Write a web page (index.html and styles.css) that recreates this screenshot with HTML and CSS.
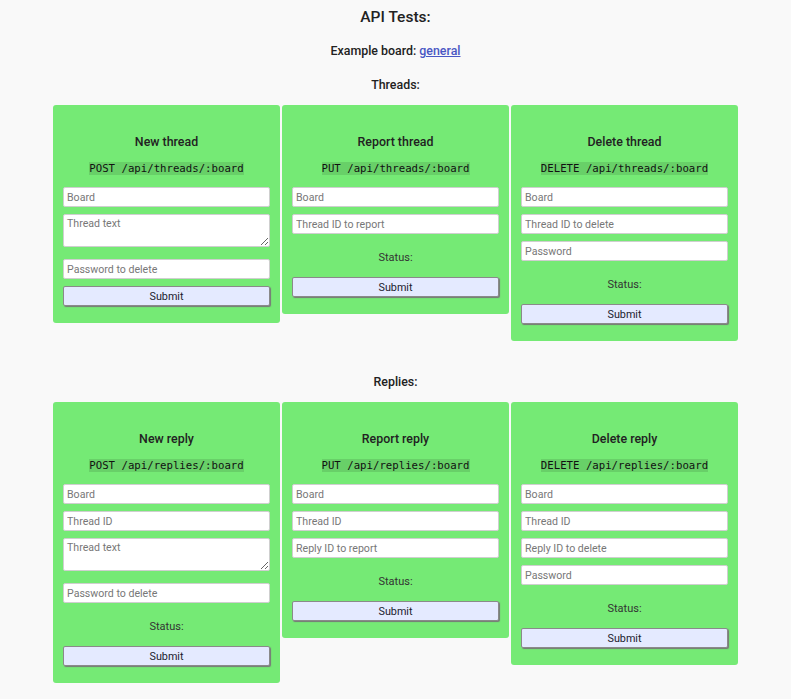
FILE: index.html
```html
<!DOCTYPE html>
<html>
<head>
<meta charset="utf-8">
<title>API Tests</title>
<link rel="stylesheet" href="styles.css">
</head>
<body>
<h1 class="title">API Tests:</h1>
<p class="example">Example board: <a href="#">general</a></p>

<h2 class="section section-threads">Threads:</h2>
<div class="cards">
  <form class="card">
    <h3 class="card-title">New thread</h3>
    <div class="endpoint"><code>POST /api/threads/:board</code></div>
    <input class="field" type="text" placeholder="Board">
    <textarea class="field area" placeholder="Thread text"></textarea>
    <input class="field" type="text" placeholder="Password to delete">
    <button class="submit" type="button">Submit</button>
  </form>
  <form class="card">
    <h3 class="card-title">Report thread</h3>
    <div class="endpoint"><code>PUT /api/threads/:board</code></div>
    <input class="field" type="text" placeholder="Board">
    <input class="field" type="text" placeholder="Thread ID to report">
    <p class="status">Status:</p>
    <button class="submit" type="button">Submit</button>
  </form>
  <form class="card">
    <h3 class="card-title">Delete thread</h3>
    <div class="endpoint"><code>DELETE /api/threads/:board</code></div>
    <input class="field" type="text" placeholder="Board">
    <input class="field" type="text" placeholder="Thread ID to delete">
    <input class="field" type="text" placeholder="Password">
    <p class="status">Status:</p>
    <button class="submit" type="button">Submit</button>
  </form>
</div>

<h2 class="section section-replies">Replies:</h2>
<div class="cards">
  <form class="card">
    <h3 class="card-title">New reply</h3>
    <div class="endpoint"><code>POST /api/replies/:board</code></div>
    <input class="field" type="text" placeholder="Board">
    <input class="field" type="text" placeholder="Thread ID">
    <textarea class="field area" placeholder="Thread text"></textarea>
    <input class="field" type="text" placeholder="Password to delete">
    <p class="status">Status:</p>
    <button class="submit" type="button">Submit</button>
  </form>
  <form class="card">
    <h3 class="card-title">Report reply</h3>
    <div class="endpoint"><code>PUT /api/replies/:board</code></div>
    <input class="field" type="text" placeholder="Board">
    <input class="field" type="text" placeholder="Thread ID">
    <input class="field" type="text" placeholder="Reply ID to report">
    <p class="status">Status:</p>
    <button class="submit" type="button">Submit</button>
  </form>
  <form class="card">
    <h3 class="card-title">Delete reply</h3>
    <div class="endpoint"><code>DELETE /api/replies/:board</code></div>
    <input class="field" type="text" placeholder="Board">
    <input class="field" type="text" placeholder="Thread ID">
    <input class="field" type="text" placeholder="Reply ID to delete">
    <input class="field" type="text" placeholder="Password">
    <p class="status">Status:</p>
    <button class="submit" type="button">Submit</button>
  </form>
</div>
</body>
</html>
```

FILE: styles.css
```css
html, body {
  margin: 0;
  padding: 0;
}
body {
  background: #f9f9f9;
  font-family: Roboto, "Liberation Sans", sans-serif;
  color: #222;
  text-align: center;
  padding-bottom: 20px;
}
.title {
  font-size: 15.5px;
  font-weight: 500;
  line-height: 22px;
  margin: 6px 0 0;
}
.example {
  font-size: 12.4px;
  font-weight: 500;
  line-height: 16px;
  margin: 15px 0 0;
}
.example a {
  color: #4a57c4;
}
.section {
  font-size: 12.4px;
  font-weight: 500;
  line-height: 16px;
  margin: 0 0 12px;
}
.section-threads {
  margin-top: 18px;
}
.section-replies {
  margin-top: 33px;
  margin-bottom: 12px;
}
.cards {
  display: flex;
  justify-content: center;
  align-items: flex-start;
  gap: 2px;
}
.card {
  width: 227px;
  box-sizing: border-box;
  background: #75ea75;
  border-radius: 3px;
  padding: 10px;
  display: flex;
  flex-direction: column;
  align-items: stretch;
}
.card-title {
  font-size: 12.4px;
  font-weight: 500;
  line-height: 16px;
  margin: 19px 0 10px;
  color: #222;
}
.endpoint {
  line-height: 13px;
  height: 13px;
  margin-bottom: 14px;
}
.endpoint code {
  font-family: "DejaVu Sans Mono", monospace;
  font-size: 10.7px;
  line-height: 13px;
  display: inline-block;
  background: rgba(0, 0, 0, 0.11);
  color: #111;
}
.field {
  display: block;
  box-sizing: border-box;
  width: 100%;
  height: 20px;
  margin: 0 0 7px;
  padding: 0 3px;
  border: 1px solid #cfcfcf;
  border-radius: 2px;
  background: #fff;
  font-family: Roboto, "Liberation Sans", sans-serif;
  font-size: 10.6px;
  color: #222;
}
.field::placeholder {
  color: #777;
}
.area {
  height: 33px;
  padding-top: 2px;
  margin-bottom: 12px;
  resize: both;
}
.status {
  font-size: 11px;
  line-height: 15px;
  margin: 9px 0 12px;
  color: #333;
}
.submit {
  display: block;
  box-sizing: border-box;
  width: 100%;
  height: 20px;
  margin: 0 0 7px;
  padding: 0;
  border: 1px solid #8a8a8a;
  border-radius: 2px;
  background: #e4eaff;
  box-shadow: 1px 1px 1px #777;
  font-family: Roboto, "Liberation Sans", sans-serif;
  font-size: 10.8px;
  color: #1b1b2e;
}
```
